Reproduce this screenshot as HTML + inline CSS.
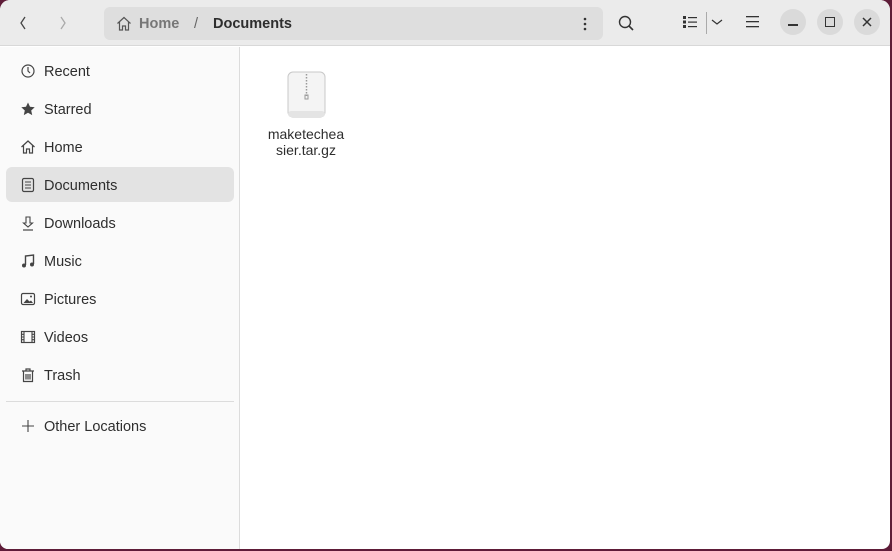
<!DOCTYPE html>
<html><head><style>
*{margin:0;padding:0;box-sizing:border-box}
body{width:892px;height:551px;background:#5e1c38;font-family:"Liberation Sans","DejaVu Sans",sans-serif;overflow:hidden;position:relative}
.win{position:absolute;left:0;top:0;width:890px;height:549px;background:#fff;border-radius:10px 10px 8px 8px;overflow:hidden}
.hdr{position:absolute;left:0;top:0;width:890px;height:46px;background:#ebebeb;border-bottom:1px solid #d8d8d8}
.side{position:absolute;left:0;top:47px;width:240px;height:502px;background:#fafafa;border-right:1px solid #dcdcdc}
.item{position:absolute;left:6px;width:228px;height:35px;border-radius:6px;font-size:14.5px;color:#2e2e2e;line-height:35px;padding-left:38px;padding-top:2px}
.item.sel{background:#e3e3e3}
.item svg{position:absolute;left:14px;top:10px}
.path{position:absolute;left:104px;top:7px;width:499px;height:33px;background:#dedede;border-radius:6px;font-size:14.5px;font-weight:bold;line-height:33px;padding-top:2px}
.path span{top:1px}
.cb{position:absolute;top:9px;width:26px;height:26px;border-radius:50%;background:#dadada}
</style></head><body>
<div class="win">
<div class="hdr">
<svg style="position:absolute;left:18px;top:15px" width="10" height="16"><path d="M7 2L3 8l4 6" stroke="#444" stroke-width="1.3" fill="none"/></svg>
<svg style="position:absolute;left:58px;top:15px" width="10" height="16"><path d="M3 2l4 6-4 6" stroke="#aaa" stroke-width="1.3" fill="none"/></svg>
<div class="path">
<svg style="position:absolute;left:12px;top:9px" width="16" height="15"><path d="M1.5 7.5L8 1.5l6.5 6M3.5 6v8h3v-4h3v4h3V6" stroke="#555" stroke-width="1.2" fill="none"/></svg>
<span style="position:absolute;left:35px;color:#777">Home</span>
<span style="position:absolute;left:90px;color:#666;font-weight:normal">/</span>
<span style="position:absolute;left:109px;color:#2e2e2e">Documents</span>
<svg style="position:absolute;left:479px;top:10px" width="4" height="14"><circle cx="2" cy="2" r="1.3" fill="#333"/><circle cx="2" cy="7" r="1.3" fill="#333"/><circle cx="2" cy="12" r="1.3" fill="#333"/></svg>
</div>
<svg style="position:absolute;left:617px;top:14px" width="18" height="18"><circle cx="8" cy="8" r="5.5" stroke="#333" stroke-width="1.4" fill="none"/><path d="M12 12l4 4" stroke="#333" stroke-width="1.6"/></svg>
<svg style="position:absolute;left:683px;top:15px" width="14" height="14"><g fill="#333"><rect x="0" y="1" width="3" height="3"/><rect x="0" y="5.5" width="3" height="3"/><rect x="0" y="10" width="3" height="3"/><rect x="5" y="2" width="9" height="1.2"/><rect x="5" y="6.5" width="9" height="1.2"/><rect x="5" y="11" width="9" height="1.2"/></g></svg>
<div style="position:absolute;left:706px;top:12px;width:1px;height:22px;background:#aaa"></div>
<svg style="position:absolute;left:711px;top:18px" width="12" height="8"><path d="M1 2l5 4 5-4" stroke="#333" stroke-width="1.2" fill="none"/></svg>
<svg style="position:absolute;left:746px;top:16px" width="14" height="12"><g fill="#333"><rect y="0" width="13" height="1.3"/><rect y="5" width="13" height="1.3"/><rect y="10" width="13" height="1.3"/></g></svg>
<div class="cb" style="left:780px"><div style="position:absolute;left:8px;top:15px;width:10px;height:1.5px;background:#333"></div></div>
<div class="cb" style="left:817px"><div style="position:absolute;left:8px;top:8px;width:10px;height:10px;border:1.4px solid #333"></div></div>
<div class="cb" style="left:854px"><svg style="position:absolute;left:8px;top:8px" width="10" height="10"><path d="M1 1l8 8M9 1l-8 8" stroke="#333" stroke-width="1.5"/></svg></div>
</div>
<div class="side">
<div class="item" style="top:6px"><svg width="16" height="16"><circle cx="8" cy="8" r="6" stroke="#444" stroke-width="1.2" fill="none"/><path d="M8 4v4l2 2" stroke="#444" stroke-width="1.2" fill="none"/></svg>Recent</div>
<div class="item" style="top:44px"><svg width="16" height="16"><path d="M8 1.5l2 4.3 4.7.5-3.5 3.2 1 4.6L8 11.7 3.8 14.1l1-4.6L1.3 6.3 6 5.8z" fill="#444"/></svg>Starred</div>
<div class="item" style="top:82px"><svg width="16" height="16"><path d="M1.5 8L8 2l6.5 6M3.5 6.5V14h3v-4h3v4h3V6.5" stroke="#444" stroke-width="1.2" fill="none"/></svg>Home</div>
<div class="item sel" style="top:120px"><svg width="16" height="16"><rect x="2.5" y="1.5" width="11" height="13" rx="1.5" stroke="#444" stroke-width="1.2" fill="none"/><path d="M5 5h6M5 8h6M5 11h6" stroke="#444" stroke-width="1.1"/></svg>Documents</div>
<div class="item" style="top:158px"><svg width="16" height="16"><path d="M6 2h4v6h2.5L8 12 3.5 8H6z" stroke="#444" stroke-width="1.1" fill="none"/><path d="M3 15h10" stroke="#444" stroke-width="1.2"/></svg>Downloads</div>
<div class="item" style="top:196px"><svg width="16" height="16"><path d="M5.5 12V3l8-1v9" stroke="#444" stroke-width="1.4" fill="none"/><circle cx="4" cy="12.5" r="2" fill="#444"/><circle cx="12" cy="11.5" r="2" fill="#444"/></svg>Music</div>
<div class="item" style="top:234px"><svg width="16" height="16"><rect x="1.5" y="2.5" width="13" height="11" rx="1.5" stroke="#444" stroke-width="1.2" fill="none"/><path d="M3.5 12l3.5-4 2.5 2.5 1.5-1 2 2.5z" fill="#444"/><circle cx="11" cy="5.5" r="1" fill="#444"/></svg>Pictures</div>
<div class="item" style="top:272px"><svg width="16" height="16"><rect x="1.5" y="2.5" width="13" height="11" stroke="#444" stroke-width="1.2" fill="none"/><path d="M4 2.5v11M12 2.5v11M1.5 8h2.5M12 8h2.5M1.5 5.3h2.5M1.5 10.7h2.5M12 5.3h2.5M12 10.7h2.5" stroke="#444" stroke-width="1.1"/></svg>Videos</div>
<div class="item" style="top:310px"><svg width="16" height="16"><path d="M2 4h12M6 4V2h4v2M3.5 4.5v10h9v-10M6 7v5.5M8 7v5.5M10 7v5.5" stroke="#444" stroke-width="1.2" fill="none"/></svg>Trash</div>
<div style="position:absolute;left:6px;top:354px;width:228px;height:1px;background:#dcdcdc"></div>
<div class="item" style="top:361px"><svg width="16" height="16"><path d="M8 2v12M2 8h12" stroke="#444" stroke-width="1.1"/></svg>Other Locations</div>
</div>
<svg style="position:absolute;left:287px;top:71px" width="40" height="48"><rect x="1" y="1" width="37" height="45" rx="5" fill="#f4f4f4" stroke="#c8c8c8"/><rect x="1" y="40" width="37" height="6" rx="3" fill="#e4e4e4"/><path d="M19.5 3v22" stroke="#999" stroke-width="1.5" stroke-dasharray="1.5 1.5"/><rect x="18" y="24" width="3" height="4" fill="none" stroke="#999"/></svg>
<div style="position:absolute;left:256px;top:126px;width:100px;text-align:center;font-size:14px;line-height:16px;color:#2e2e2e">maketechea<br>sier.tar.gz</div>
</div>
</body></html>
